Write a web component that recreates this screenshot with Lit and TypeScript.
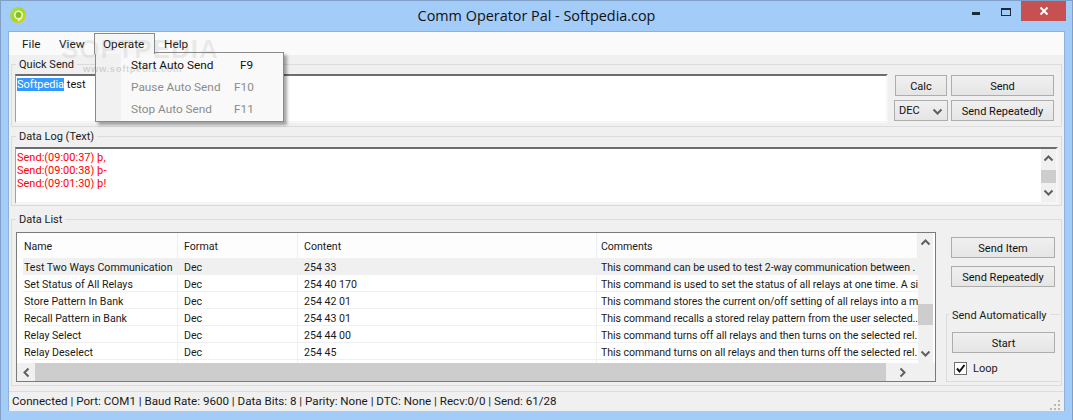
import { LitElement, html, css, svg } from "lit";
import { customElement } from "lit/decorators.js";

const up = svg`<svg class="chev" width="11" height="7" viewBox="0 0 11 7"><path d="M1.5 5.5 5.5 1.5 9.5 5.5" fill="none" stroke="#606060" stroke-width="2"/></svg>`;
const down = svg`<svg class="chev" width="11" height="7" viewBox="0 0 11 7"><path d="M1.5 1.5 5.5 5.5 9.5 1.5" fill="none" stroke="#606060" stroke-width="2"/></svg>`;
const left = svg`<svg class="chev" width="7" height="11" viewBox="0 0 7 11"><path d="M5.5 1.5 1.5 5.5 5.5 9.5" fill="none" stroke="#606060" stroke-width="2"/></svg>`;
const right = svg`<svg class="chev" width="7" height="11" viewBox="0 0 7 11"><path d="M1.5 1.5 5.5 5.5 1.5 9.5" fill="none" stroke="#606060" stroke-width="2"/></svg>`;

const rows = [
  ["Test Two Ways Communication", "Dec", "254 33", "This command can be used to test 2-way communication between ."],
  ["Set Status of All Relays", "Dec", "254 40 170", "This command is used to set the status of all relays at one time. A si"],
  ["Store Pattern In Bank", "Dec", "254 42 01", "This command stores the current on/off setting of all relays into a m"],
  ["Recall Pattern in Bank", "Dec", "254 43 01", "This command recalls a stored relay pattern from the user selected.."],
  ["Relay Select", "Dec", "254 44 00", "This command turns off all relays and then turns on the selected rel."],
  ["Relay Deselect", "Dec", "254 45", "This command turns on all relays and then turns off the selected rel."],
];

@customElement("app-root")
export class AppRoot extends LitElement {
  static styles = css`
    :host { display: block; width: 1073px; height: 420px; box-sizing: border-box; background: #a3ccf8; border: 1px solid #7f9fc6; border-bottom: 0;
      font: 11px/14px Roboto, "Open Sans", sans-serif; color: #1a1a1a; position: relative; overflow: hidden; }
    * { box-sizing: border-box; }
    .titlebar { height: 30px; display: grid; grid-template-columns: 1fr auto 1fr; }
    .ico { margin: 3px 0 0 8px; display: block; }
    .title { font: 14.4px/29px "Open Sans", sans-serif; color: #111; }
    .ctrls { display: flex; justify-content: flex-end; margin-right: 6px; }
    .ctl { width: 30px; height: 20px; display: flex; align-items: center; justify-content: center; }
    .min { width: 8px; height: 3px; background: #1c2a3a; margin-top: 5px; }
    .max { width: 10px; height: 8px; border: 1px solid #1c2a3a; border-top-width: 2px; margin-top: 2px; }
    .close { width: 45px; background: #c75050; }
    .client { margin: 0 7px; width: 1057px; height: 380px; background: #f0f0f0; border: 1px solid #8fb0d8; border-bottom: 0; display: flex; flex-direction: column; }
    .menubar { height: 23px; background: #fafafa; display: flex; padding: 1px 0 0 3px; flex: none; font-size: 11.8px; }
    .mi { padding: 4px 0 0 10px; height: 21px; }
    .file { width: 37px; }
    .view { width: 45px; }
    .mi.open { width: 61px; border: 1px solid #8a8a8a; border-bottom: 0; background: #f6f6f6; padding: 3px 0 0 8px; position: relative; z-index: 3; }
    .help { padding-left: 9px; }
    .body { flex: 1; padding: 1px 2px 0 2px; display: flex; flex-direction: column; }
    fieldset { margin: 0; border: 1px solid #dcdcdc; min-width: 0; padding: 0; }
    legend { margin-left: 1px; padding: 0 3px; line-height: 17px; height: 16px; color: #1a1a1a; white-space: nowrap; }
    .qs { height: 71px; display: flex; padding: 2px 7px 0 3px; }
    .sunken { background: #fff; border: 2px solid; border-color: #6d6d6d #f6f6f6 #f6f6f6 #a0a0a0; border-left-width: 1px; }
    .qsbox { width: 873px; height: 49px; padding: 1px 1px; line-height: 15px; color: #111; }
    .hl { background: #3399ff; color: #fff; }
    .qctl { margin-left: 6px; display: grid; grid-template-columns: 54px 103px; column-gap: 3px; row-gap: 4px; grid-auto-rows: 21px; margin-top: 1px; }
    .btn { border: 1px solid #adadad; background: linear-gradient(#f0f0f0, #e5e5e5); height: 21px; padding-top: 2px; display: flex; align-items: center; justify-content: center; color: #111; }
    .calc { margin: 0 1px; }
    .sel { justify-content: space-between; padding: 1px 4px 0; }
    .log { height: 78px; margin-top: 1px; padding: 3px 3px 0 3px; }
    .logbox { height: 57px; padding: 0 0 0 1px; display: flex; color: #ff0000; line-height: 13px; }
    .logtext { flex: 1; padding-top: 2px; }
    .vs { width: 15px; background: #f0f0f0; display: flex; flex-direction: column; align-items: center; }
    .vs .arrow { height: 19px; display: flex; align-items: center; justify-content: center; flex: none; }
    .vs .sp { flex: 1; }
    .sp.log-gap { flex: 0 0 2px; }
    .sp.list-gap { flex: 0 0 52px; }
    .thumb { background: #cdcdcd; width: 100%; }
    .thumb.log-t { height: 17px; }
    .thumb.list-t { height: 21px; }
    .list-f { height: 175px; margin-top: 5px; padding: 5px 1px 0 4px; display: flex; }
    .list-f > legend { margin-left: 0; }
    .list { width: 920px; height: 150px; border: 1px solid #7a7a7a; background: #fff; display: grid; grid-template-columns: 901px 17px; grid-template-rows: 130px 18px; font-size: 10.6px; }
    .table { overflow: hidden; }
    .r { display: grid; grid-template-columns: 161px 120px 299px 321px; height: 17px; line-height: 17px; }
    .r.h { height: 25px; line-height: 26px; background: #fdfdfd; }
    .r.h .c { border-right: 1px solid #e8eef8; border-bottom: 0; background: transparent; }
    .r.h .c:first-child { margin: 0; padding-left: 7px; }
    .c { white-space: nowrap; overflow: hidden; padding: 1px 0 0 6px; border-right: 1px solid #f0f0f0; border-bottom: 1px solid #f0f0f0; }
    .c:first-child { margin-left: 6px; padding-left: 1px; }
    .c:last-child { border-right: 0; padding-left: 4px; letter-spacing: -0.05px; }
    .r.s .c { background: #f0f0f0; }
    .tail { height: 3px; display: grid; grid-template-columns: 161px 120px 299px 321px; }
    .tail i { border-right: 1px solid #f0f0f0; }
    .hs { background: #f0f0f0; display: flex; align-items: center; }
    .hs .arrow { width: 18px; display: flex; justify-content: center; flex: none; }
    .hs .hthumb { background: #cdcdcd; height: 100%; width: 851px; }
    .hs .end { flex: 1; display: flex; justify-content: center; }
    .corner { background: #f0f0f0; }
    .side { width: 114px; margin-left: 10px; padding-top: 5px; display: flex; flex-direction: column; }
    .side > .btn { margin: 0 5px 8px; }
    .auto { height: 76px; margin-top: 11px; padding: 10px 5px 0; border-right: 0; }
    .auto legend { margin-left: -3px; padding: 0 3px; line-height: 19px; }
    .loop { display: flex; align-items: center; gap: 6px; margin: 9px 0 0 2px; height: 12px; }
    .loop span { padding-top: 2px; }
    .cb { width: 13px; height: 13px; border: 1px solid #707070; background: #fff; display: block; }
    .status { height: 20px; border-top: 1px solid #dcdcdc; margin-top: 3px; padding: 2px 0 0 3px; display: flex; justify-content: space-between; background: #f0f0f0; flex: none; font-size: 11.6px; }
    .grip { margin: 6px 3px 0 0; }
    .menu { position: absolute; left: 94px; top: 51px; width: 189px; height: 70px; background: linear-gradient(90deg, #f1f1f1 25px, #f9f9f9 25px); border: 1px solid #8a8a8a; box-shadow: 3px 3px 3px rgba(0,0,0,.35); z-index: 2; padding-top: 1px; font-size: 11.8px; }
    .menu .m { display: grid; grid-template-columns: 35px 103px 1fr; height: 22px; line-height: 22px; color: #111; }
    .menu .m.d { color: #8c8c8c; }
    .menu .f9 { padding-left: 6px; }
    .wm { position: absolute; left: 60px; top: 33px; font: bold 26px/30px "Liberation Sans", sans-serif; letter-spacing: 1px; color: rgba(120,120,120,.12); pointer-events: none; z-index: 4; }
    .wm2 { position: absolute; left: 82px; top: 62px; font: bold 9.5px/12px "Liberation Sans", sans-serif; letter-spacing: .6px; color: rgba(120,120,120,.28); pointer-events: none; z-index: 4; }
  `;

  render() {
    return html`
      <div class="titlebar">
        <svg class="ico" width="20" height="20" viewBox="0 0 20 20">
          <defs><linearGradient id="g" x1="0" y1="0" x2="1" y2="1"><stop offset="0" stop-color="#9fe07a"/><stop offset=".5" stop-color="#a9d41f"/><stop offset="1" stop-color="#e6d60a"/></linearGradient></defs>
          <circle cx="9" cy="11" r="8" fill="url(#g)"/>
          <circle cx="9.5" cy="11" r="3.7" fill="#7fbf20" stroke="#eef7d0" stroke-width="1.6"/>
          <path d="M12.5 14 9 17" stroke="#eef7d0" stroke-width="1.4" fill="none"/>
        </svg>
        <div class="title">Comm Operator Pal - Softpedia.cop</div>
        <div class="ctrls">
          <div class="ctl"><div class="min"></div></div>
          <div class="ctl"><div class="max"></div></div>
          <div class="ctl close"><svg width="10" height="10" viewBox="0 0 10 10"><path d="M1.5 1.5 8.5 8.5M8.5 1.5 1.5 8.5" stroke="#fff" stroke-width="2"/></svg></div>
        </div>
      </div>
      <div class="client">
        <div class="menubar">
          <div class="mi file">File</div><div class="mi view">View</div><div class="mi open">Operate</div><div class="mi help">Help</div>
        </div>
        <div class="body">
          <fieldset class="qs">
            <legend>Quick Send</legend>
            <div class="sunken qsbox"><span class="hl">Softpedia</span> test</div>
            <div class="qctl">
              <div class="btn calc">Calc</div><div class="btn">Send</div>
              <div class="btn sel"><span>DEC</span>${down}</div><div class="btn">Send Repeatedly</div>
            </div>
          </fieldset>
          <fieldset class="log">
            <legend>Data Log (Text)</legend>
            <div class="sunken logbox">
              <div class="logtext">Send:(09:00:37) þ,<br />Send:(09:00:38) þ-<br />Send:(09:01:30) þ!</div>
              <div class="vs"><div class="arrow">${up}</div><div class="sp log-gap"></div><div class="thumb log-t"></div><div class="sp"></div><div class="arrow">${down}</div></div>
            </div>
          </fieldset>
          <fieldset class="list-f">
            <legend>Data List</legend>
            <div class="list">
              <div class="table">
                <div class="r h"><div class="c">Name</div><div class="c">Format</div><div class="c">Content</div><div class="c">Comments</div></div>
                ${rows.map((r, i) => html`<div class="r ${i === 0 ? "s" : ""}">${r.map((t) => html`<div class="c">${t}</div>`)}</div>`)}
                <div class="tail"><i></i><i></i><i></i></div>
              </div>
              <div class="vs"><div class="arrow">${up}</div><div class="sp list-gap"></div><div class="thumb list-t"></div><div class="sp"></div><div class="arrow">${down}</div></div>
              <div class="hs"><div class="arrow">${left}</div><div class="hthumb"></div><div class="end">${right}</div></div>
              <div class="corner"></div>
            </div>
            <div class="side">
              <div class="btn">Send Item</div>
              <div class="btn">Send Repeatedly</div>
              <fieldset class="auto">
                <legend>Send Automatically</legend>
                <div class="btn">Start</div>
                <div class="loop">
                  <svg class="cb" viewBox="0 0 11 11"><path d="M2 5.5 4.5 8.5 9.5 2" fill="none" stroke="#111" stroke-width="2"/></svg>
                  <span>Loop</span>
                </div>
              </fieldset>
            </div>
          </fieldset>
        </div>
        <div class="status">
          <span>Connected | Port: COM1 | Baud Rate: 9600 | Data Bits: 8 | Parity: None | DTC: None | Recv:0/0 | Send: 61/28</span>
          <svg class="grip" width="11" height="11" viewBox="0 0 11 11" fill="#b8b8b8"><rect x="8" y="0" width="2" height="2"/><rect x="4" y="4" width="2" height="2"/><rect x="8" y="4" width="2" height="2"/><rect x="0" y="8" width="2" height="2"/><rect x="4" y="8" width="2" height="2"/><rect x="8" y="8" width="2" height="2"/></svg>
        </div>
      </div>
      <div class="menu">
        <div class="m"><span></span><span>Start Auto Send</span><span class="f9">F9</span></div>
        <div class="m d"><span></span><span>Pause Auto Send</span><span>F10</span></div>
        <div class="m d"><span></span><span>Stop Auto Send</span><span>F11</span></div>
      </div>
      <div class="wm">SOFTPEDIA</div>
      <div class="wm2">www.softpedia.com</div>
    `;
  }
}
